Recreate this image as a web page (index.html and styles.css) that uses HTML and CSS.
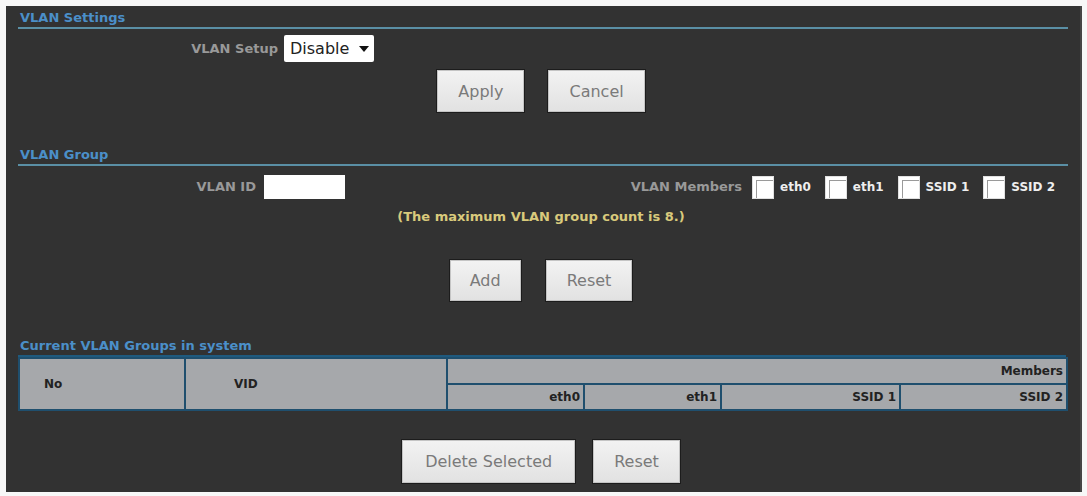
FILE: index.html
```html
<!DOCTYPE html>
<html lang="en">
<head>
    <meta charset="UTF-8">
    <meta name="viewport" content="width=device-width, initial-scale=1.0">
    <title>VLAN Settings</title>
    <link rel="stylesheet" href="styles.css">
</head>
<body>
    <div class="vlan-panel">
        <!-- VLAN Settings -->
        <h3 class="section-title">VLAN Settings</h3>
        <div class="setup-row">
            <label class="field-label setup-label" for="vlanSetup">VLAN Setup</label>
            <span class="select-wrap">
                <select id="vlanSetup" name="vlanSetup">
                    <option>Disable</option>
                    <option>Enable</option>
                </select>
            </span>
        </div>
        <div class="button-row apply-row">
            <button class="btn btn-apply">Apply</button>
            <button class="btn btn-cancel">Cancel</button>
        </div>

        <!-- VLAN Group -->
        <h3 class="section-title group-title">VLAN Group</h3>
        <div class="group-row">
            <label class="field-label id-label" for="vlanId">VLAN ID</label>
            <input type="text" id="vlanId" name="vlanId" class="id-input">
            <div class="members">
                <span class="field-label members-label">VLAN Members</span>
                <label class="member"><input type="checkbox" class="member-check"> eth0</label>
                <label class="member"><input type="checkbox" class="member-check"> eth1</label>
                <label class="member"><input type="checkbox" class="member-check"> SSID 1</label>
                <label class="member"><input type="checkbox" class="member-check"> SSID 2</label>
            </div>
        </div>
        <p class="group-note">(The maximum VLAN group count is 8.)</p>
        <div class="button-row add-row">
            <button class="btn btn-add">Add</button>
            <button class="btn btn-reset">Reset</button>
        </div>

        <!-- Current groups -->
        <h3 class="section-title current-title">Current VLAN Groups in system</h3>
        <table class="group-table">
            <colgroup>
                <col class="col-no">
                <col class="col-vid">
                <col class="col-eth">
                <col class="col-eth">
                <col class="col-ssid1">
                <col class="col-ssid2">
            </colgroup>
            <tr>
                <th rowspan="2" class="cell-no">No</th>
                <th rowspan="2" class="cell-vid">VID</th>
                <th colspan="4" class="cell-right">Members</th>
            </tr>
            <tr>
                <th class="cell-right">eth0</th>
                <th class="cell-right">eth1</th>
                <th class="cell-right">SSID 1</th>
                <th class="cell-right">SSID 2</th>
            </tr>
        </table>
        <div class="button-row delete-row">
            <button class="btn btn-delete">Delete Selected</button>
            <button class="btn btn-reset">Reset</button>
        </div>
    </div>
</body>
</html>
```

FILE: styles.css
```css
* {
    box-sizing: border-box;
    margin: 0;
    padding: 0;
}

body {
    font-family: "DejaVu Sans", Verdana, sans-serif;
    background-color: #f7f7f7;
    padding: 6px;
}

.vlan-panel {
    width: 1076px;
    height: 486px;
    background-color: #323232;
    border-right: 2px solid #454545;
    padding: 4px 12px 0 12px;
}

.section-title {
    font-size: 13px;
    font-weight: bold;
    line-height: 16px;
    color: #4b8fc9;
    padding: 0 2px 1px;
    border-bottom: 2px solid #5a8fa5;
}

.field-label {
    font-size: 13px;
    font-weight: bold;
    color: #999;
    line-height: 16px;
}

/* VLAN Settings */
.setup-row {
    display: flex;
    align-items: center;
    margin-top: 6px;
}

.setup-label {
    width: 260px;
    text-align: right;
    margin-right: 6px;
}

.select-wrap {
    position: relative;
    display: block;
    width: 90px;
    height: 27px;
}

.select-wrap select {
    appearance: none;
    -webkit-appearance: none;
    width: 100%;
    height: 100%;
    border: none;
    border-radius: 2px;
    background-color: #fff;
    color: #222;
    font-family: "DejaVu Sans", Verdana, sans-serif;
    font-size: 16px;
    padding: 0 0 0 6px;
    outline: none;
}

.select-wrap::after {
    content: "";
    position: absolute;
    right: 5px;
    top: 11px;
    border-left: 5px solid transparent;
    border-right: 5px solid transparent;
    border-top: 6px solid #111;
    pointer-events: none;
}

.button-row {
    display: flex;
    justify-content: center;
    padding-right: 4px;
}

.btn {
    height: 42px;
    padding: 0 20px;
    font-family: "DejaVu Sans", Verdana, sans-serif;
    font-size: 16px;
    color: #7a7a7a;
    background: linear-gradient(#f2f2f2, #e2e2e2);
    border: 1px solid #c4c4c4;
    box-shadow: 0 0 0 1px #1c1c1c;
    cursor: pointer;
}

.apply-row {
    margin-top: 8px;
    gap: 24px;
}

/* VLAN Group */
.group-title {
    margin-top: 35px;
}

.group-row {
    display: flex;
    align-items: center;
    margin-top: 9px;
    height: 24px;
}

.id-label {
    width: 238px;
    text-align: right;
    margin-right: 8px;
}

.id-input {
    width: 81px;
    height: 24px;
    border: none;
    background-color: #fff;
    outline: none;
}

.members {
    display: flex;
    align-items: center;
    margin-left: auto;
    padding-right: 13px;
}

.members-label {
    margin-right: 10px;
}

.member {
    display: flex;
    align-items: center;
    gap: 6px;
    font-size: 12px;
    font-weight: bold;
    color: #eee;
    margin-right: 14px;
}

.member:last-child {
    margin-right: 0;
}

.member-check {
    appearance: none;
    -webkit-appearance: none;
    width: 22px;
    height: 23px;
    background-color: #fff;
    box-shadow: inset 3px 3px 0 #fff, inset 4px 4px 0 #9a9a9a;
    border: 1px solid #e0e0e0;
}

.group-note {
    margin-top: 10px;
    padding-right: 4px;
    text-align: center;
    font-size: 13px;
    font-weight: bold;
    line-height: 16px;
    color: #d9ca7c;
}

.add-row {
    margin-top: 35px;
    gap: 25px;
}

.add-row .btn {
    height: 41px;
}

.btn-add {
    padding: 0 19px;
}

/* Current groups */
.current-title {
    margin-top: 37px;
    margin-right: 2px;
    border-bottom-color: #1f5a7e;
}

.group-table {
    width: 1048px;
    table-layout: fixed;
    border-collapse: collapse;
    background-color: #a6a8ab;
    border: 2px solid #1f4f6e;
    border-top: none;
}

.col-no { width: 166px; }
.col-vid { width: 262px; }
.col-eth { width: 137px; }
.col-ssid1 { width: 179px; }
.col-ssid2 { width: 167px; }

.group-table th {
    border: 2px solid #1f4f6e;
    font-size: 12px;
    font-weight: bold;
    color: #222;
    height: 26px;
    padding: 0 3px;
}

.group-table .cell-no {
    text-align: left;
    padding-left: 24px;
}

.group-table .cell-vid {
    text-align: left;
    padding-left: 48px;
}

.group-table .cell-right {
    text-align: right;
}

.delete-row {
    margin-top: 29px;
    gap: 18px;
}

.delete-row .btn {
    height: 43px;
}

.btn-delete {
    padding: 0 22px;
}
```
